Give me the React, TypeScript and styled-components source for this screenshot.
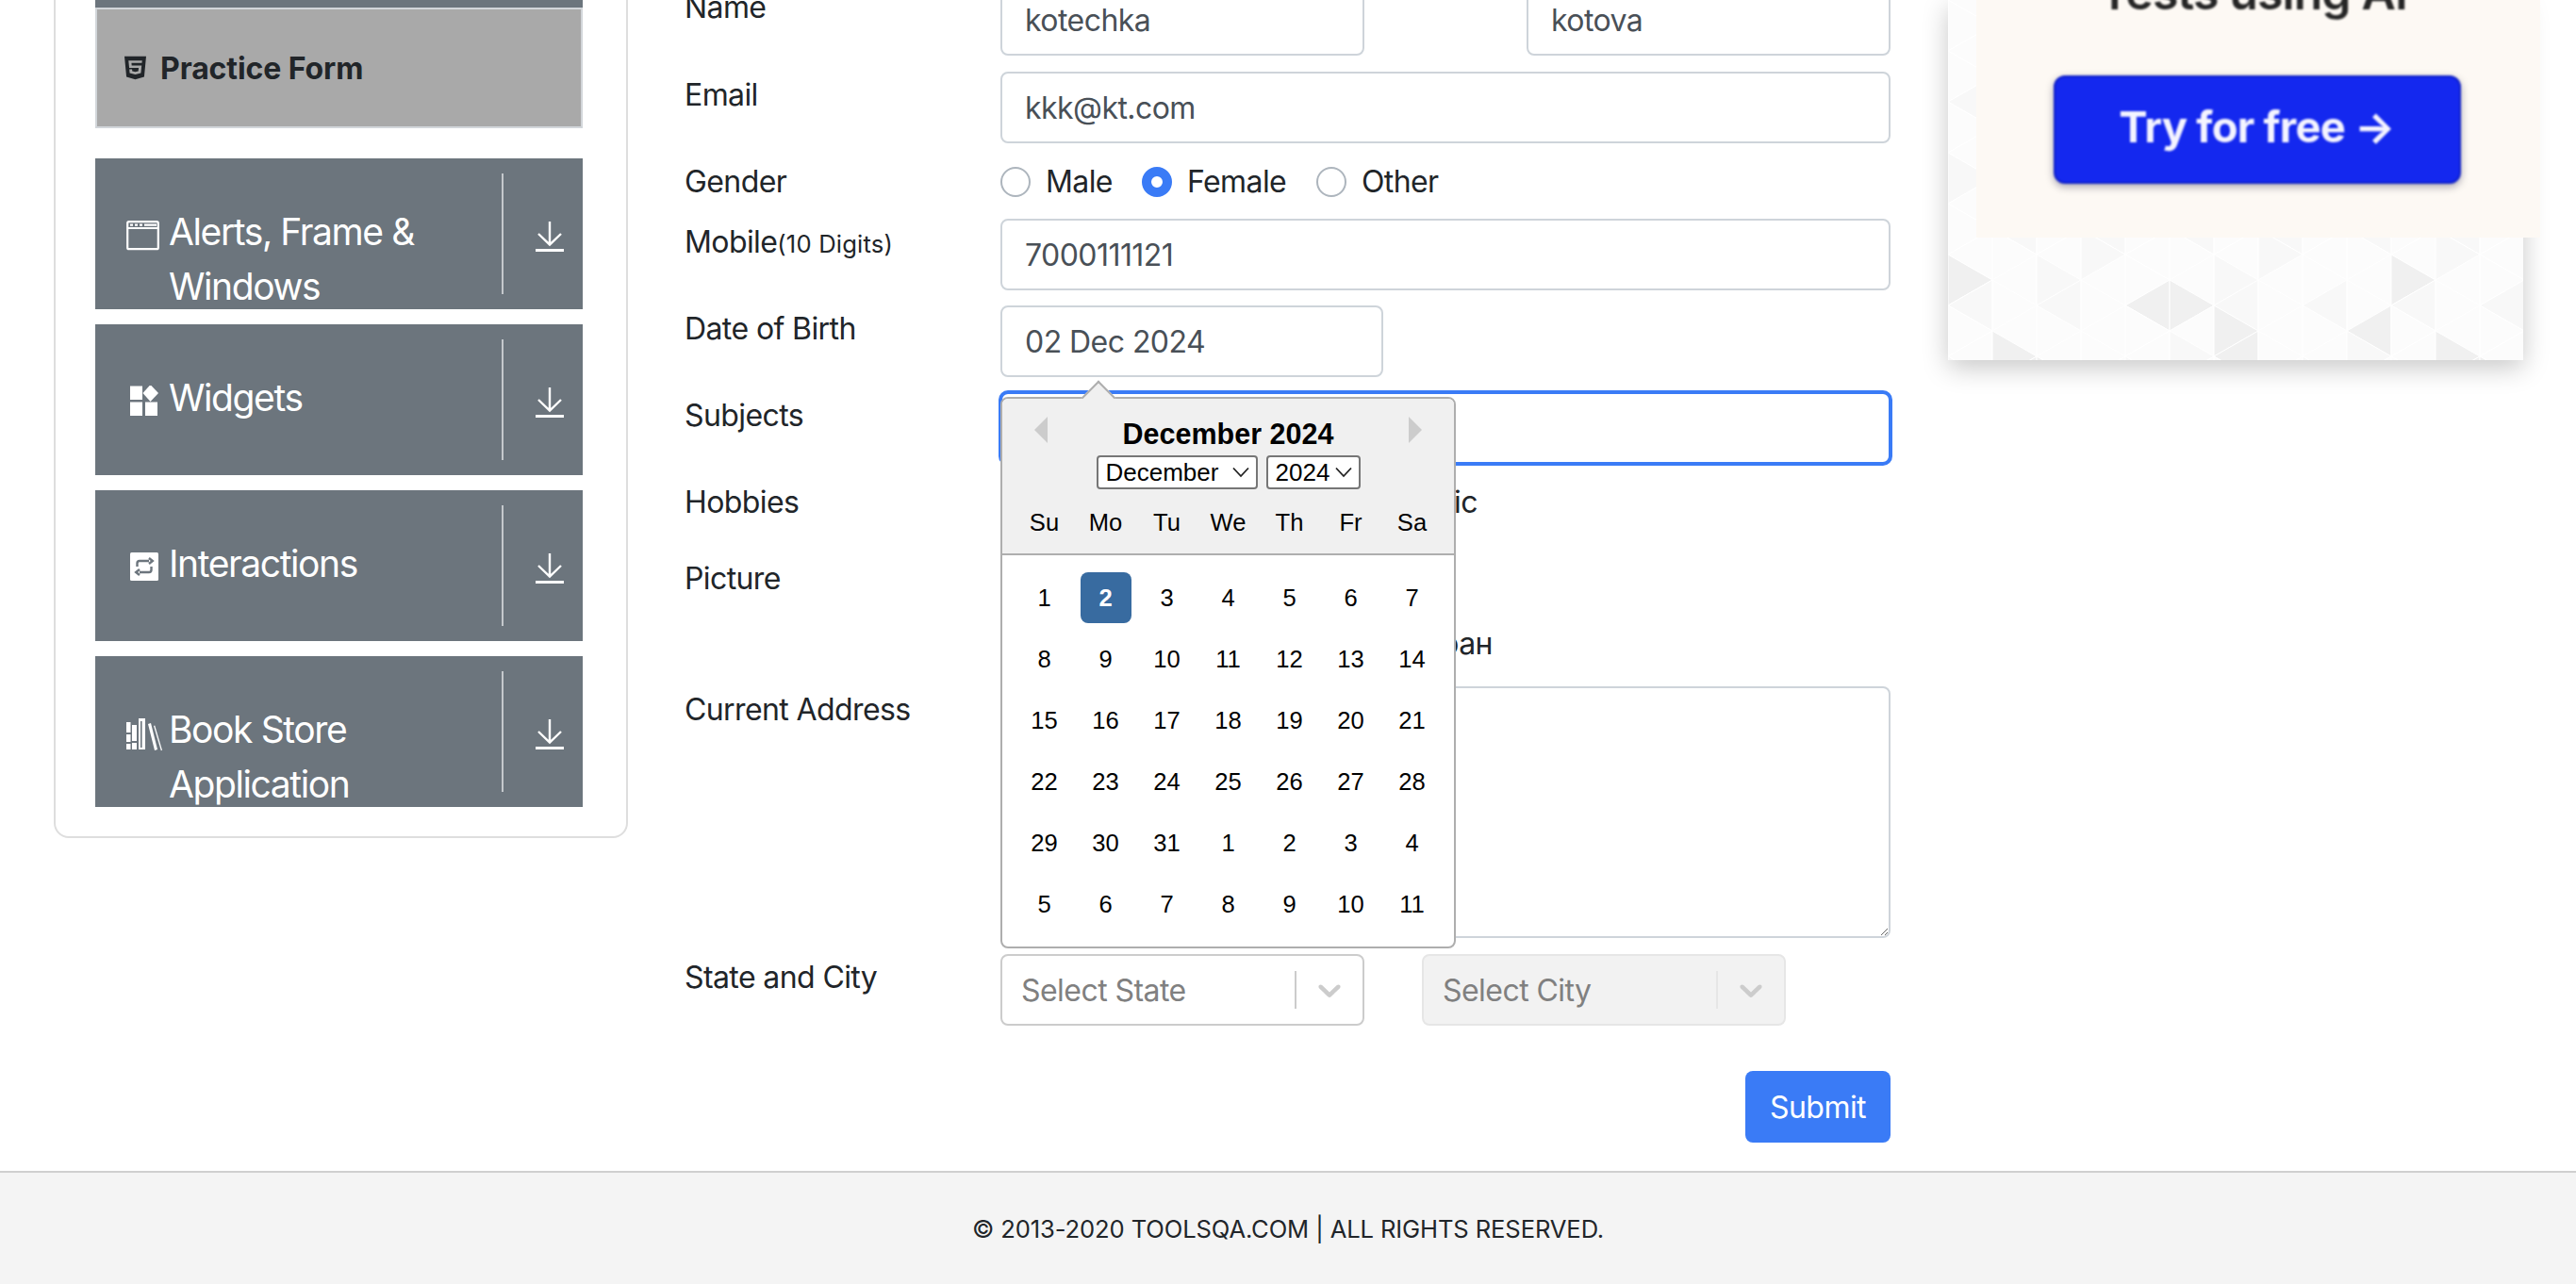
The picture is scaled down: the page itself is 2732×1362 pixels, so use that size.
import React from "react";
import styled, { createGlobalStyle } from "styled-components";
import { FaHtml5 } from "react-icons/fa";

const Global = createGlobalStyle`
  html, body { margin: 0; padding: 0; background: #fff; }
  body { font-family: Inter, "Noto Sans", sans-serif; color: #212529; }
  * { box-sizing: border-box; }
`;

const Page = styled.div`
  height: 1362px;
  overflow: hidden;
  display: flex;
  flex-direction: column;
`;
const Main = styled.main`
  height: 1242px;
  display: flex;
  align-items: flex-start;
  padding-left: 57px;
`;

/* ---------- sidebar ---------- */
const SideCard = styled.aside`
  width: 609px;
  margin-top: -60px;
  height: 949px;
  padding: 60px 46px 0 42px;
  border: 2px solid #dedede;
  border-radius: 16px;
  display: flex;
  flex-direction: column;
`;
const TopSliver = styled.div`
  height: 8px;
  margin-top: -2px;
  background: #6c757d;
  flex: none;
`;
const ActiveItem = styled.div`
  height: 128px;
  flex: none;
  margin-bottom: 32px;
  background: #a9a9a9;
  border: 2px solid #d2d6da;
  display: flex;
  align-items: center;
  gap: 15px;
  padding: 0 0 0 29px;
  font-size: 32px;
  font-weight: 700;
  letter-spacing: -0.1px;
  svg { width: 23px; height: 28px; flex: none; }
`;
const GroupItem = styled.div`
  height: 160px;
  flex: none;
  margin-bottom: 16px;
  background: #6c757d;
  color: #fff;
  display: flex;
  overflow: hidden;
`;
const GroupIcon = styled.span`
  width: 78px;
  flex: none;
  padding: 65px 0 0 31px;
  svg { display: block; width: 40px; height: 36px; }
`;
const GroupText = styled.div`
  width: 353px;
  flex: none;
  padding-top: 49px;
  font-size: 39px;
  line-height: 58px;
  letter-spacing: -1.4px;
`;
const GroupDivider = styled.span`
  width: 2px;
  flex: none;
  margin: 16px 0;
  background: #c4c8cc;
`;
const GroupArrow = styled.span`
  flex: 1;
  display: flex;
  justify-content: center;
  padding: 67px 0 0 14px;
  svg { width: 30px; height: 32px; }
`;

const stroke = { fill: "none", stroke: "#fff", strokeWidth: 2.2 } as const;
const WindowIcon = () => (
  <svg viewBox="0 0 40 36">
    <rect x="3.200" y="2.200" width="32.600" height="29" rx="1.500" {...stroke} />
    <path d="M3 9h33" {...stroke} />
    <path d="M6 5.600h3M11 5.600h3M16 5.600h3M21 5.600h13" {...stroke} />
  </svg>
);
const WidgetsIcon = () => (
  <svg viewBox="0 0 40 36" fill="#fff">
    <rect x="6" y="0.500" width="13" height="14.500" />
    <rect x="6" y="17.500" width="13" height="14.500" />
    <rect x="22" y="17.500" width="13" height="14.500" />
    <path d="M27.500 -1 L36 8 L27.500 17 L19.500 8 Z" />
  </svg>
);
const InteractionsIcon = () => (
  <svg viewBox="0 0 40 36">
    <rect x="6" y="1" width="30" height="30" rx="1.500" fill="#fff" />
    <path d="M13.500 16v-3.500c0-1.500 1-2.500 2.500-2.500h10M26 7l3.800 3-3.800 3M28.500 16v3.500c0 1.500-1 2.500-2.500 2.500H16M16 25l-3.800-3 3.800-3" fill="none" stroke="#6c757d" strokeWidth="2.400" />
  </svg>
);
const BooksIcon = () => (
  <svg viewBox="0 0 40 36" fill="#fff">
    <rect x="2" y="5" width="4.500" height="11" />
    <rect x="2" y="18" width="4.500" height="8" />
    <rect x="2" y="28" width="4.500" height="6" />
    <rect x="8" y="8" width="5" height="17" />
    <rect x="8" y="27" width="5" height="7" />
    <path d="M15 1h7v33h-7zM17 4v28h1.600V4z" fillRule="evenodd" />
    <path d="M25 7l3-1 7 28-3 1z" />
    <path d="M31 9l1.200-.4 7.800 26.200-1.200.4z" />
  </svg>
);
const DownArrow = () => (
  <svg viewBox="0 0 30 32" fill="none" stroke="#fff" strokeWidth="2.400">
    <path d="M15 0v24M3 13l12 11.500L27 13" />
    <path d="M0 30.500h30" strokeWidth="3" />
  </svg>
);

/* ---------- form ---------- */
const FormCol = styled.section`
  width: 1279px;
  margin-left: 60px;
  margin-top: -17px;
  display: flex;
  flex-direction: column;
`;
const Row = styled.div<{ $h: number; $mb?: number }>`
  height: ${(p) => p.$h}px;
  margin-bottom: ${(p) => p.$mb ?? 16}px;
  display: flex;
  flex: none;
`;
const Label = styled.label`
  width: 335px;
  flex: none;
  padding-top: 1px;
  font-size: 32px;
  line-height: 48px;
  letter-spacing: -0.6px;
  small { font-size: 25.600px; letter-spacing: 0.2px; }
`;
const Control = styled.div`
  flex: 1;
  display: flex;
  position: relative;
`;
const BetweenControl = styled(Control)`
  justify-content: space-between;
`;
const Input = styled.input<{ $w?: number }>`
  width: ${(p) => (p.$w ? `${p.$w}px` : "100%")};
  height: 76px;
  padding: 0 24px;
  border: 2px solid #ced4da;
  border-radius: 8px;
  font: 32px/48px Inter, sans-serif;
  letter-spacing: -0.55px;
  color: #495057;
  background: #fff;
  outline: none;
`;
const FocusedInput = styled(Input)`
  border-color: #3a7bf6;
  box-shadow: 0 0 0 2px #3a7bf6;
`;
const TextArea = styled.textarea`
  width: 100%;
  height: 267px;
  border: 2px solid #ced4da;
  border-radius: 8px;
  outline: none;
  background: #fff;
`;
const RadioGroup = styled.div`
  display: flex;
  align-items: center;
  height: 48px;
  margin-top: 1px;
`;
const Radio = styled.span<{ $on?: boolean }>`
  width: 32px;
  height: 32px;
  flex: none;
  border-radius: 50%;
  border: ${(p) => (p.$on ? "10px solid #3a7bf6" : "2px solid #adb5bd")};
  background: #fff;
`;
const RadioText = styled.span<{ $w: number }>`
  width: ${(p) => p.$w}px;
  padding-left: 16px;
  font-size: 32px;
  letter-spacing: -0.6px;
  line-height: 48px;
`;
const CheckGroup = styled.div`
  width: 506px;
  height: 48px;
  display: flex;
  justify-content: flex-end;
  align-items: center;
  font-size: 32px;
  letter-spacing: -0.55px;
`;
const PictureArea = styled.div`
  width: 522px;
  font-size: 32px;
  letter-spacing: -0.55px;
  line-height: 48px;
`;
const FileName = styled.div`
  margin-top: 70px;
  text-align: right;
  white-space: nowrap;
`;
const SelectBox = styled.div<{ $off?: boolean }>`
  width: 386px;
  height: 76px;
  display: flex;
  align-items: center;
  border: 2px solid ${(p) => (p.$off ? "#e6e6e6" : "#cccccc")};
  border-radius: 8px;
  background: ${(p) => (p.$off ? "#f2f2f2" : "#fff")};
  font-size: 32px;
  letter-spacing: -0.55px;
  color: #808080;
  padding-left: 20px;
  span { flex: 1; }
  i { width: 2px; height: 40px; background: ${(p) => (p.$off ? "#e6e6e6" : "#cccccc")}; }
  svg { width: 40px; height: 40px; margin: 0 15px; fill: #cccccc; }
`;
const SelectRow = styled.div`
  display: flex;
  gap: 61px;
`;
const Submit = styled.button`
  align-self: flex-end;
  width: 154px;
  height: 76px;
  margin-top: 48px;
  border: 0;
  border-radius: 8px;
  background: #3a7bf6;
  color: #fff;
  font: 32px Inter, sans-serif;
  letter-spacing: -0.55px;
`;

/* ---------- calendar ---------- */
const Calendar = styled.div`
  position: absolute;
  left: 0;
  top: 97px;
  width: 483px;
  height: 585px;
  z-index: 5;
  background: #fff;
  border: 2px solid #aeaeae;
  border-radius: 8px;
  font-family: "Liberation Sans", Arial, sans-serif;
  color: #000;
  &::before {
    content: "";
    position: absolute;
    left: 89px;
    top: -14px;
    width: 24px;
    height: 24px;
    transform: rotate(45deg);
    background: #f0f0f0;
    border-top: 2px solid #aeaeae;
    border-left: 2px solid #aeaeae;
  }
`;
const CalHead = styled.div`
  position: relative;
  height: 166px;
  padding-top: 19px;
  background: #f0f0f0;
  border-bottom: 2px solid #aeaeae;
  border-radius: 6px 6px 0 0;
`;
const CalTitle = styled.div`
  text-align: center;
  font-size: 30.500px;
  font-weight: 700;
  line-height: 36px;
`;
const Nav = styled.span<{ $right?: boolean }>`
  position: absolute;
  top: 19px;
  width: 0;
  height: 0;
  border-top: 14px solid transparent;
  border-bottom: 14px solid transparent;
  ${(p) =>
    p.$right
      ? "right: 34px; border-left: 14px solid #ccc;"
      : "left: 34px; border-right: 14px solid #ccc;"}
`;
const CalSelects = styled.div`
  display: flex;
  justify-content: center;
  gap: 9px;
  margin-top: 5px;
`;
const CalSelect = styled.div<{ $w: number }>`
  width: ${(p) => p.$w}px;
  height: 36px;
  padding: 0 7px 0 8px;
  display: flex;
  align-items: center;
  justify-content: space-between;
  background: #fff;
  border: 2px solid #767676;
  border-radius: 4px;
  font-size: 26px;
  svg { width: 18px; height: 12px; }
`;
const DayGrid = styled.div`
  display: grid;
  grid-template-columns: repeat(7, 54px);
  column-gap: 11px;
  justify-content: center;
`;
const WeekDays = styled(DayGrid)`
  margin-top: 17px;
  font-size: 25.600px;
  line-height: 36px;
  text-align: center;
`;
const DaysBody = styled(DayGrid)`
  padding-top: 18px;
  row-gap: 11px;
`;
const Day = styled.div<{ $on?: boolean }>`
  height: 54px;
  border-radius: 8px;
  font-size: 25.600px;
  line-height: 54px;
  text-align: center;
  background: ${(p) => (p.$on ? "#386ba0" : "transparent")};
  color: ${(p) => (p.$on ? "#fff" : "#000")};
  font-weight: ${(p) => (p.$on ? 700 : 400)};
`;

/* ---------- ad ---------- */
const Ad = styled.div`
  position: relative;
  width: 610px;
  height: 382px;
  margin-left: 61px;
  flex: none;
  background: #fbfbfb;
  box-shadow: 0 8px 26px rgba(0, 0, 0, 0.22);
  svg { display: block; width: 100%; height: 100%; }
`;
const AdPanel = styled.div`
  position: absolute;
  left: 30px;
  top: -20px;
  width: 598px;
  height: 272px;
  background: #fdf9f4;
  display: flex;
  flex-direction: column;
  align-items: center;
  font-family: Inter, sans-serif;
`;
const AdTitle = styled.div`
  height: 114px;
  margin-top: -14px;
  margin-left: -11px;
  font-size: 50px;
  line-height: 52px;
  font-weight: 600;
  letter-spacing: -0.9px;
  color: #262626;
  filter: blur(0.8px);
  white-space: nowrap;
`;
const AdButton = styled.div`
  width: 432px;
  height: 115px;
  margin-left: -3px;
  border-radius: 12px;
  background: #1428ef;
  border: 2px solid #0f20c8;
  box-shadow: 0 3px 8px rgba(0, 0, 50, 0.35);
  color: #f4f4ff;
  font-size: 45.500px;
  font-weight: 700;
  letter-spacing: -0.8px;
  line-height: 105px;
  text-align: center;
  filter: blur(0.9px);
`;

/* ---------- footer ---------- */
const Footer = styled.footer`
  height: 120px;
  flex: none;
  background: #f4f4f4;
  border-top: 2px solid #cfcfcf;
  display: flex;
  align-items: center;
  justify-content: center;
  font-size: 25.600px;
  letter-spacing: -0.12px;
`;

const weeks = [
  [1, 2, 3, 4, 5, 6, 7],
  [8, 9, 10, 11, 12, 13, 14],
  [15, 16, 17, 18, 19, 20, 21],
  [22, 23, 24, 25, 26, 27, 28],
  [29, 30, 31, 1, 2, 3, 4],
  [5, 6, 7, 8, 9, 10, 11],
];
const dayNames = ["Su", "Mo", "Tu", "We", "Th", "Fr", "Sa"];
const groups = [
  { icon: <WindowIcon />, text: "Alerts, Frame & Windows" },
  { icon: <WidgetsIcon />, text: "Widgets" },
  { icon: <InteractionsIcon />, text: "Interactions" },
  { icon: <BooksIcon />, text: "Book Store Application" },
];
const chevron = (
  <svg viewBox="0 0 18 12" fill="none" stroke="#222" strokeWidth="1.800">
    <path d="M1 1.500l8 8.500 8-8.500" />
  </svg>
);
const selectChevron = (
  <svg viewBox="0 0 20 20">
    <path d="M4.516 7.548c0.436-0.446 1.043-0.481 1.576 0l3.908 3.747 3.908-3.747c0.533-0.481 1.141-0.446 1.576 0 0.436 0.445 0.408 1.197 0 1.615-0.406 0.418-4.695 4.502-4.695 4.502-0.217 0.223-0.502 0.335-0.789 0.335s-0.572-0.112-0.79-0.335c0 0-4.287-4.084-4.695-4.502s-0.436-1.17 0-1.615z" />
  </svg>
);

const Pattern = () => {
  const cells: React.ReactElement[] = [];
  const shade = (k: number, r: number) => {
    if (r >= 5 && k % 5 === 0) return "#f0f0f0";
    if (k % 4 === 1) return "#f8f8f8";
    return "#fcfcfc";
  };
  for (let r = -1; r < 9; r++) {
    for (let c = 0; c < 14; c++) {
      const x = c * 47;
      const y = r * 54 + (c % 2 ? 27 : 0);
      cells.push(
        <path key={`a${r}-${c}`} d={`M${x} ${y}l47 27-47 27z`} fill={shade(r * 3 + c * 7, r)} stroke="#fff" strokeWidth="1" />,
        <path key={`b${r}-${c}`} d={`M${x + 47} ${y + 27}v54l-47-27z`} fill={shade(r * 11 + c * 2 + 2, r)} stroke="#fff" strokeWidth="1" />
      );
    }
  }
  return (
    <svg viewBox="0 0 610 382" preserveAspectRatio="none">
      {cells}
    </svg>
  );
};

export default function App() {
  return (
    <Page>
      <Global />
      <Main>
        <SideCard>
          <TopSliver />
          <ActiveItem>
            <FaHtml5 preserveAspectRatio="none" />
            Practice Form
          </ActiveItem>
          {groups.map((g) => (
            <GroupItem key={g.text}>
              <GroupIcon>{g.icon}</GroupIcon>
              <GroupText>{g.text}</GroupText>
              <GroupDivider />
              <GroupArrow>
                <DownArrow />
              </GroupArrow>
            </GroupItem>
          ))}
        </SideCard>

        <FormCol>
          <Row $h={76} $mb={17}>
            <Label>Name</Label>
            <BetweenControl>
              <Input $w={386} readOnly value="kotechka" />
              <Input $w={386} readOnly value="kotova" />
            </BetweenControl>
          </Row>
          <Row $h={76}>
            <Label>Email</Label>
            <Control>
              <Input readOnly value="kkk@kt.com" />
            </Control>
          </Row>
          <Row $h={48}>
            <Label>Gender</Label>
            <Control>
              <RadioGroup>
                <Radio />
                <RadioText $w={118}>Male</RadioText>
                <Radio $on />
                <RadioText $w={153}>Female</RadioText>
                <Radio />
                <RadioText $w={120}>Other</RadioText>
              </RadioGroup>
            </Control>
          </Row>
          <Row $h={76}>
            <Label>
              Mobile<small>(10 Digits)</small>
            </Label>
            <Control>
              <Input readOnly value="7000111121" />
            </Control>
          </Row>
          <Row $h={76}>
            <Label>Date of Birth</Label>
            <Control>
              <Input $w={406} readOnly value="02 Dec 2024" />
              <Calendar>
                <CalHead>
                  <Nav />
                  <Nav $right />
                  <CalTitle>December 2024</CalTitle>
                  <CalSelects>
                    <CalSelect $w={171}>December {chevron}</CalSelect>
                    <CalSelect $w={100}>2024 {chevron}</CalSelect>
                  </CalSelects>
                  <WeekDays>
                    {dayNames.map((d) => (
                      <div key={d}>{d}</div>
                    ))}
                  </WeekDays>
                </CalHead>
                <DaysBody>
                  {weeks.flat().map((d, i) => (
                    <Day key={i} $on={i === 1}>
                      {d}
                    </Day>
                  ))}
                </DaysBody>
              </Calendar>
            </Control>
          </Row>
          <Row $h={76}>
            <Label>Subjects</Label>
            <Control>
              <FocusedInput readOnly value="" />
            </Control>
          </Row>
          <Row $h={65}>
            <Label>Hobbies</Label>
            <Control>
              <CheckGroup>
                <span>Music</span>
              </CheckGroup>
            </Control>
          </Row>
          <Row $h={123}>
            <Label>Picture</Label>
            <Control>
              <PictureArea>
                <FileName>Снимок экран</FileName>
              </PictureArea>
            </Control>
          </Row>
          <Row $h={267} $mb={17}>
            <Label>Current Address</Label>
            <Control>
              <TextArea readOnly />
            </Control>
          </Row>
          <Row $h={76} $mb={0}>
            <Label>State and City</Label>
            <SelectRow>
              <SelectBox>
                <span>Select State</span>
                <i />
                {selectChevron}
              </SelectBox>
              <SelectBox $off>
                <span>Select City</span>
                <i />
                {selectChevron}
              </SelectBox>
            </SelectRow>
          </Row>
          <Submit>Submit</Submit>
        </FormCol>

        <Ad>
          <Pattern />
          <AdPanel>
            <AdTitle>Tests using AI</AdTitle>
            <AdButton>Try for free →</AdButton>
          </AdPanel>
        </Ad>
      </Main>
      <Footer>© 2013-2020 TOOLSQA.COM | ALL RIGHTS RESERVED.</Footer>
    </Page>
  );
}
